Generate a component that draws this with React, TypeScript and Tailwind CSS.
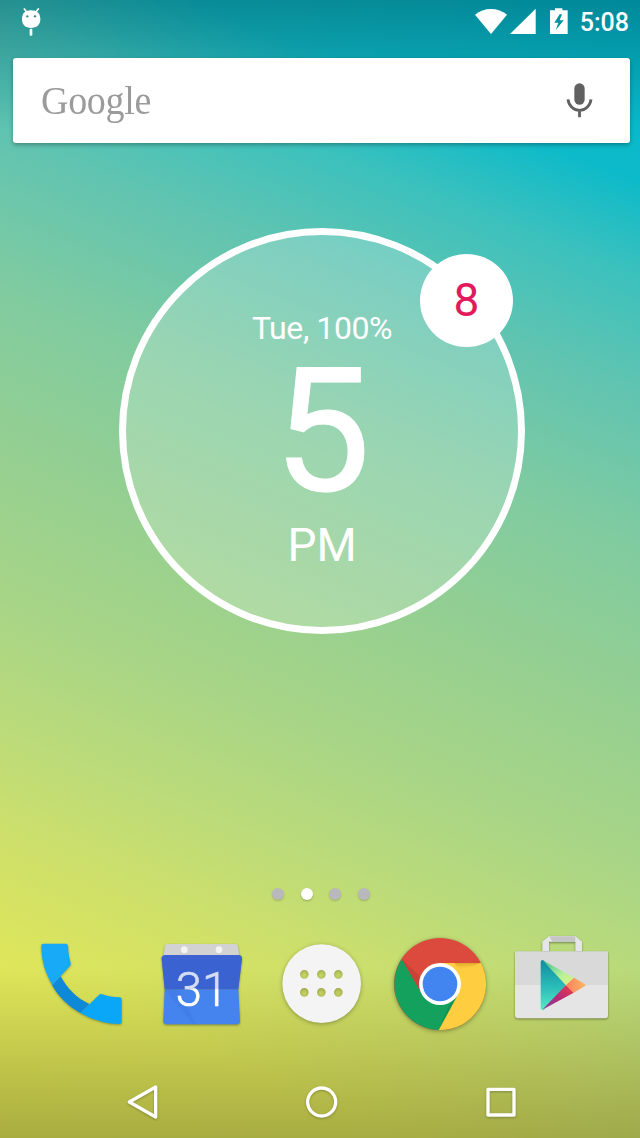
import type { ReactNode } from "react";

const PAGES = 4;
const ACTIVE_PAGE = 1;

export default function App() {
	return (
		<div className="relative flex h-[1138px] w-[640px] flex-col overflow-hidden bg-[linear-gradient(202deg,#00b6cc_0%,#0dbac9_13%,#3cc1bd_20%,#60c4b1_28%,#80cba0_39%,#94cf92_50%,#a8d586_62%,#bcdb79_71%,#cfe069_79%,#dfe659_88%,#e1e654_100%)] font-['Roboto',sans-serif] text-white">
			<div className="absolute inset-x-0 top-0 h-[130px] bg-linear-to-b from-black/25 to-transparent" />
			<div className="absolute inset-x-0 bottom-0 h-[170px] bg-linear-to-t from-black/25 to-transparent" />
			<div className="relative flex flex-1 flex-col">
				<StatusBar />
				<SearchBar />
				<Clock />
				<Pager />
				<Dock />
				<NavBar />
			</div>
		</div>
	);
}

function StatusBar() {
	return (
		<header className="flex h-[44px] items-start justify-between pr-[11px] pl-[20px]">
			<svg className="mt-[6px] h-[32px] w-[22px]" viewBox="60 18 66 96">
				<path
					d="M73 27l9 12M115 27l-10 12"
					stroke="#fff"
					strokeWidth="5"
					strokeLinecap="round"
				/>
				<path
					d="M66 58C66 39 76 31 93 31s28 8 28 27c0 17-12 26-28 26S66 75 66 58z"
					fill="#fff"
				/>
				<rect x="89" y="86" width="8" height="21" rx="3" fill="#fff" />
				<circle cx="82" cy="49" r="3.5" fill="#3c8f88" />
				<circle cx="105" cy="49" r="3.5" fill="#3c8f88" />
			</svg>
			<div className="flex items-start">
				<svg
					className="mt-[7px] h-[30px] w-[96px]"
					viewBox="102 21 288 90"
					fill="#fff"
				>
					<path d="M105 44Q126 27 153 27T201 44L153 102z" />
					<path d="M287 26v76h-77z" />
					<path
						fillRule="evenodd"
						d="M330 31h15v-6h22v6h16v71h-53zM359 43l-16 25h12l-8 23 24-30h-12l7-18z"
					/>
				</svg>
				<span className="ml-[10px] pt-[10px] text-[25px] leading-[26px] font-medium">
					5:08
				</span>
			</div>
		</header>
	);
}

function SearchBar() {
	return (
		<div className="mt-[14px] mr-[10px] ml-[13px] flex h-[85px] items-center justify-between rounded-[3px] bg-white pr-[36px] pl-[28px] shadow-[0_2px_4px_rgba(0,0,0,0.3)]">
			<span className="-mt-[2px] origin-left scale-y-105 font-['Liberation_Serif',serif] text-[38px] leading-none tracking-[-0.3px] text-[#9b9b9b]">
				Google
			</span>
			<svg
				className="h-[36px] w-[28px]"
				viewBox="378 248 84 108"
				fill="none"
			>
				<rect
					x="403"
					y="249"
					width="31"
					height="64"
					rx="15.5"
					fill="#616161"
				/>
				<path
					d="M384 297c2 19 17 33 34.500 33s32.500-14 34.500-33M418.500 330v21"
					stroke="#616161"
					strokeWidth="8.500"
				/>
			</svg>
		</div>
	);
}

function Clock() {
	return (
		<div className="relative mt-[85px] ml-[119px] flex h-[406px] w-[406px] flex-col items-center rounded-full border-[7px] border-white bg-white/20 bg-clip-padding pt-[76px]">
			<p className="text-[32px] leading-[34px] tracking-[-0.4px]">Tue, 100%</p>
			<p className="text-[173px] leading-[172px] [-webkit-text-stroke:1px_#fff]">
				5
			</p>
			<p className="text-[46px] leading-[57px]">PM</p>
			<div className="absolute top-[18.500px] left-[294px] flex h-[93px] w-[93px] items-center justify-center rounded-full bg-white text-[46px] leading-none text-[#e3195e]">
				<span className="-mt-[1px]">8</span>
			</div>
		</div>
	);
}

function Pager() {
	return (
		<div className="mt-[254px] ml-[272px] flex h-[12px] gap-[16.700px]">
			{Array.from({ length: PAGES }, (_, i) => (
				<span
					key={i}
					className={
						i === ACTIVE_PAGE
							? "h-[12px] w-[12px] rounded-full bg-white shadow-[0_1px_2px_rgba(0,0,0,0.25)]"
							: "h-[12px] w-[12px] rounded-full bg-[#b9b9bd] shadow-[0_1px_2px_rgba(0,0,0,0.2)]"
					}
				/>
			))}
		</div>
	);
}

function Dock() {
	return (
		<div className="mt-[25px] flex h-[120px] items-start">
			<svg
				className="-mt-[5px] ml-[20px] h-[120px] w-[120px] shrink-0 drop-shadow-[0_1px_1px_rgba(0,0,0,0.3)]"
				viewBox="0 0 360 360"
			>
				<path
					d="M122 169C142 206 170 235 208 252L181 279C145 259 116 231 96 195z"
					fill="#0d89d8"
				/>
				<path
					d="M69 71h68q6 0 7 6c1 20 3 34 8 52q2 6-3 10L97 195C76 158 64 122 64 77q0-6 5-6z"
					fill="#18aaf6"
				/>
				<path
					d="M181 279l56-54q4-4 9-2c18 6 34 8 53 9q6 0 6 6v68q0 6-6 6c-43 0-83-14-118-33z"
					fill="#0aa6f8"
				/>
			</svg>
			<svg
				className="mt-[5px] ml-[5px] h-[110px] w-[110px] shrink-0 drop-shadow-[0_1px_1px_rgba(0,0,0,0.35)]"
				viewBox="0 0 330 330"
			>
				<path
					d="M68 42h202q8 0 9 8l5 33H55l4-33q1-8 9-8z"
					fill="#d2d2d2"
				/>
				<circle cx="118" cy="59" r="10" fill="#f3f3f3" />
				<circle cx="222" cy="59" r="10" fill="#f3f3f3" />
				<path
					d="M59 178h221l5 95q0 10-10 10H65q-10 0-10-10z"
					fill="#4583ee"
				/>
				<path
					d="M62 75h218q12 0 11 12l-11 91H59L50 87q-1-12 12-12z"
					fill="#3a62d1"
				/>
				<path d="M59 178h43l50 105h-7z" fill="#3a70df" opacity=".3" />
				<text
					x="171"
					y="229"
					fontSize="142"
					fontWeight="300"
					textAnchor="middle"
					fill="#fff"
					stroke="#fff"
					strokeWidth="2"
				>
					31
				</text>
				<path
					d="M62 75h218q12 0 11 12l-11 91H59L50 87q-1-12 12-12z"
					fill="#3a62d1"
					opacity=".22"
				/>
			</svg>
			<svg
				className="-mt-[5px] ml-[10px] h-[120px] w-[120px] shrink-0 drop-shadow-[0_1px_2px_rgba(0,0,0,0.3)]"
				viewBox="0 0 360 360"
			>
				<path
					fill="#f4f4f4"
					fillRule="evenodd"
					d="M170 73a118 118 0 1 0 0 236a118 118 0 1 0 0-236zM118 150a13 13 0 1 1 0 26a13 13 0 1 1 0-26zM169 150a13 13 0 1 1 0 26a13 13 0 1 1 0-26zM220 150a13 13 0 1 1 0 26a13 13 0 1 1 0-26zM118 204a13 13 0 1 1 0 26a13 13 0 1 1 0-26zM169 204a13 13 0 1 1 0 26a13 13 0 1 1 0-26zM220 204a13 13 0 1 1 0 26a13 13 0 1 1 0-26z"
				/>
			</svg>
			<svg
				className="h-[115px] w-[110px] shrink-0 drop-shadow-[0_1px_2px_rgba(0,0,0,0.35)]"
				viewBox="0 0 330 345"
			>
				<defs>
					<linearGradient id="chromeShade" x1="0" y1="0" x2="0" y2="1">
						<stop offset="0" stopColor="#c98a1c" stopOpacity=".6" />
						<stop offset="1" stopColor="#fdcd40" stopOpacity="0" />
					</linearGradient>
				</defs>
				<circle cx="165" cy="177" r="138" fill="#db4a3d" />
				<path d="M165 177V114h123A138 138 0 0 1 161 315z" fill="#fecd40" />
				<path
					d="M111 208L50 102A138 138 0 0 0 161 315l58-107z"
					fill="#14a05d"
				/>
				<path d="M208 114h80l-64 22z" fill="url(#chromeShade)" />
				<path d="M50 102l56 96-3-46z" fill="#b23a30" opacity=".45" />
				<path d="M216 215L161 315l30-73z" fill="#0b7f48" opacity=".4" />
				<circle cx="165" cy="177" r="63" fill="#fff" />
				<circle cx="165" cy="177" r="52" fill="#4285f0" />
			</svg>
			<svg
				className="ml-[10px] h-[105px] w-[115px] shrink-0 drop-shadow-[0_1px_1px_rgba(0,0,0,0.4)]"
				viewBox="0 0 345 315"
			>
				<defs>
					<linearGradient id="playTeal" x1="0" y1="0" x2="0" y2="1">
						<stop offset="0" stopColor="#0c8d9d" />
						<stop offset=".55" stopColor="#2cbdba" />
						<stop offset="1" stopColor="#55ebc4" />
					</linearGradient>
					<linearGradient id="playGreen" x1="0" y1="0" x2="1" y2="1">
						<stop offset="0" stopColor="#35bd8f" />
						<stop offset=".6" stopColor="#b5f19a" />
						<stop offset="1" stopColor="#e8f07c" />
					</linearGradient>
					<linearGradient id="playRed" x1="0" y1="1" x2="1" y2="0">
						<stop offset="0" stopColor="#8d3aa0" />
						<stop offset=".5" stopColor="#b52a77" />
						<stop offset="1" stopColor="#ec3e45" />
					</linearGradient>
					<linearGradient id="playOrange" x1="0" y1="0" x2="1" y2="0">
						<stop offset="0" stopColor="#fb7f5d" />
						<stop offset="1" stopColor="#fbb765" />
					</linearGradient>
				</defs>
				<path
					fillRule="evenodd"
					d="M112 79V50l20-17h79l20 17v29h-20V50h-79v29z"
					fill="#e6e6e6"
				/>
				<path d="M132 34h79v16h-68z" fill="#c6c6c6" />
				<path d="M30 79h279v103H30z" fill="#d9d9d9" />
				<path
					d="M30 180h279v91q0 9-9 9H39q-9 0-9-9z"
					fill="#e5e5e5"
				/>
				<path d="M107 110q3-8 10-3l66 73-66 74q-8 3-10-4z" fill="url(#playTeal)" />
				<path d="M112 105l95 53-24 23z" fill="url(#playGreen)" />
				<path d="M112 254l71-74 23 23z" fill="url(#playRed)" />
				<path d="M207 158l32 19q6 4 0 7l-33 19-23-22z" fill="url(#playOrange)" />
			</svg>
		</div>
	);
}

function NavBar() {
	return (
		<nav className="mt-[25px] flex h-[68px]">
			<NavIcon className="ml-[120px]">
				<path d="M28 96l79-45v90z" />
			</NavIcon>
			<NavIcon className="ml-[136px]">
				<circle cx="65" cy="96" r="42" />
			</NavIcon>
			<NavIcon className="ml-[135px]">
				<rect x="27" y="58" width="78" height="77" />
			</NavIcon>
		</nav>
	);
}

function NavIcon({
	className,
	children
}: {
	className: string;
	children: ReactNode;
}) {
	return (
		<svg
			className={`h-[68px] w-[44px] shrink-0 drop-shadow-[0_1px_1px_rgba(0,0,0,0.25)] ${className}`}
			viewBox="0 0 132 204"
			fill="none"
			stroke="#fff"
			strokeWidth="10"
			strokeLinejoin="round"
		>
			{children}
		</svg>
	);
}
